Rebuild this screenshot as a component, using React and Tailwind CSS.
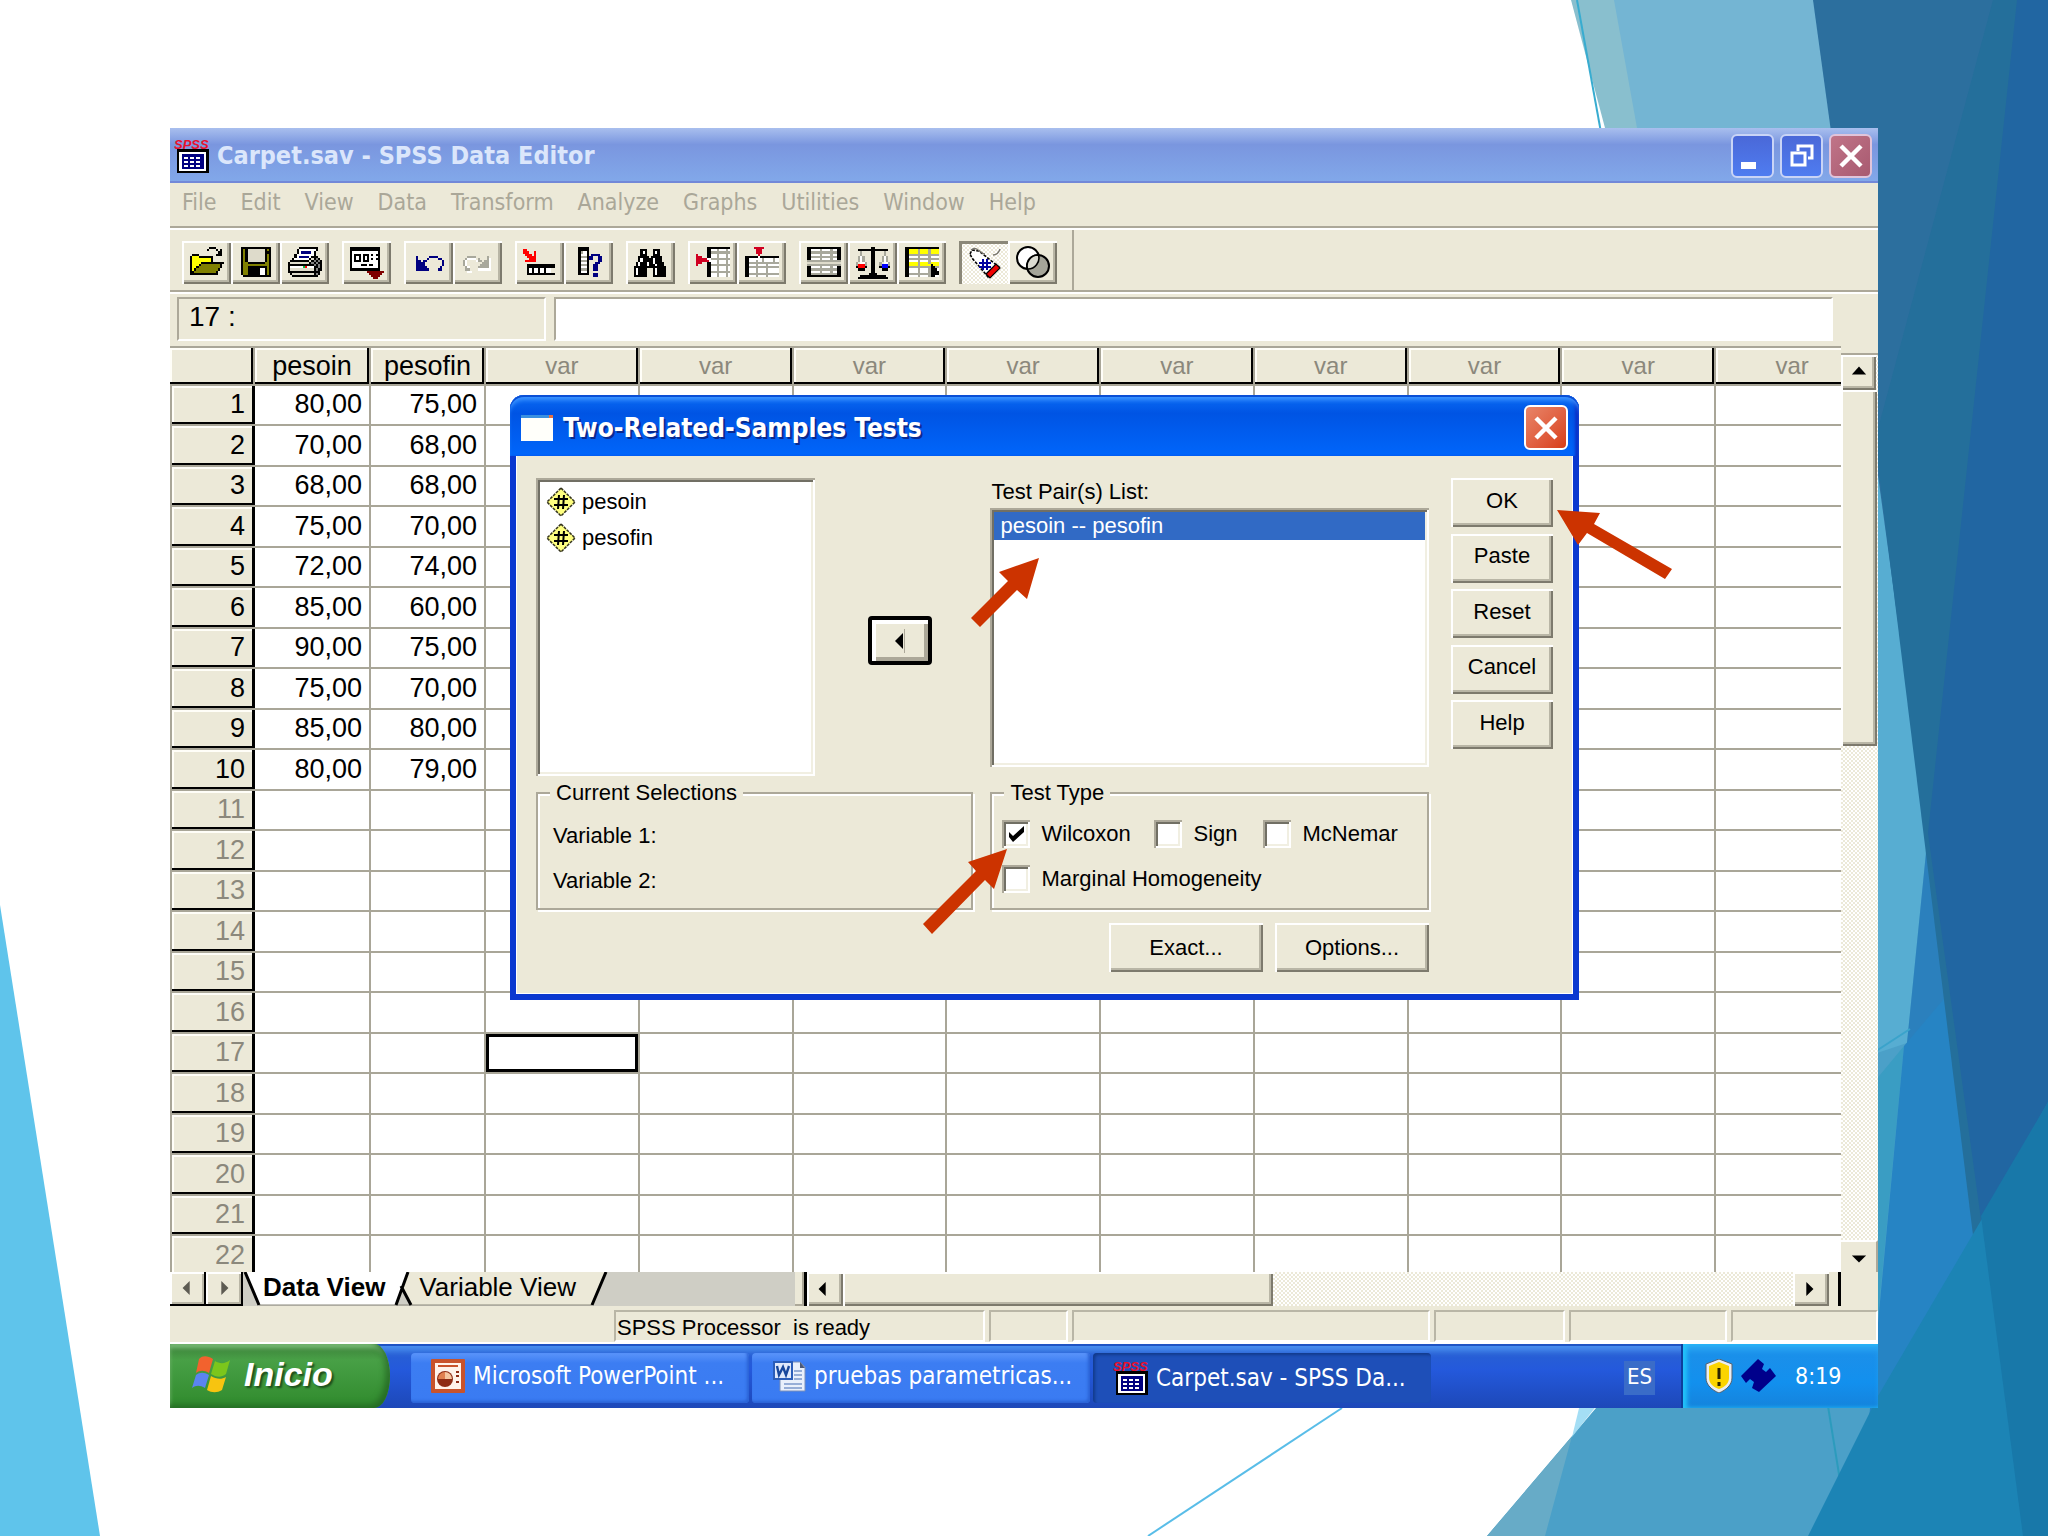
import React from "react";

const UI = "font-['DejaVu_Sans_Condensed','DejaVu_Sans',sans-serif]";
const RAISED =
  "bg-[#ece9d8] shadow-[inset_2px_2px_0_#ffffff,inset_-2px_-2px_0_#7d7a6d,inset_-4px_-4px_0_#b9b6a6]";
const DITHER =
  "bg-[repeating-conic-gradient(#ffffff_0_25%,#ece9d8_0_50%)] [background-size:4px_4px]";

const INK = {
  k: "#000000",
  w: "#ffffff",
  y: "#ffff00",
  o: "#808000",
  s: "#dedbcb",
  g: "#808080",
  G: "#a8a89c",
  r: "#ff0000",
  R: "#d00020",
  b: "#000080",
  B: "#0000ff",
  m: "#800000",
  l: "#00c040",
};

function Pixels({ map, className }) {
  const cells = [];
  map.forEach((row, y) => {
    let x = 0;
    while (x < row.length) {
      const c = row[x];
      let n = 1;
      while (row[x + n] === c) n += 1;
      if (INK[c]) cells.push(<rect key={`${x}-${y}`} x={x} y={y} width={n} height="1" fill={INK[c]} />);
      x += n;
    }
  });
  return (
    <svg viewBox="0 0 16 16" className={className} shapeRendering="crispEdges" aria-hidden="true">
      {cells}
    </svg>
  );
}

const ICONS = {
  open: [
    "................",
    ".........kkk....",
    "........k...k.k.",
    ".............kk.",
    ".kkk........kkk.",
    "kyyykkkkkkk.....",
    "kyyyyyyyyyk.....",
    "kyyyyyyyyyk.....",
    "kyyyykkkkkkkkkkk",
    "kyyykoooooooook.",
    "kyykooooooooook.",
    "kykooooooooook..",
    "kkooooooooook...",
    "kkkkkkkkkkkkk...",
  ],
  save: [
    "................",
    ".kkkkkkkkkkkkkk.",
    ".koksssssssskok.",
    ".koksssssssskkk.",
    ".koksssssssskok.",
    ".koksssssssskok.",
    ".koksssssssskok.",
    ".koksssssssskok.",
    ".kookkkkkkkkook.",
    ".kooooooooooook.",
    ".kookkkkkkkkkok.",
    ".kookkkkkkwwkok.",
    ".kookkkkkkwwkok.",
    ".kookkkkkkwwkok.",
    "..kkkkkkkkkkkkk.",
  ],
  print: [
    "................",
    ".....kkkkkkkkk..",
    "....kwwwwwwwwk..",
    "....kwbbbbbwk...",
    "...kwwwwwwwwk...",
    "...kwbbbbbwkkk..",
    "..kwwwwwwwkskgk.",
    ".kkkkkkkkkskgkgk",
    "kssssssssskgkgkk",
    "kkkkkkkkkkkkgkgk",
    "kwwwwwwlrwwwkkgk",
    "kssssssssssskgkk",
    "kkkkkkkkkkkkkkk.",
    ".ksssssssssskgk.",
    "..kkkkkkkkkkkk..",
  ],
  recall: [
    "................",
    "kkkkkkkkkkkkkk..",
    "kkkkkkkkkkkkkk..",
    "kwwwwwwwwwwwwk..",
    "kwkkkwkkkwkwkk..",
    "kwkwkwkwkwwwwk..",
    "kwkwkwkwkwkwkk..",
    "kwkkkwkkkwwwwk..",
    "kwwwwwwwwwwwwk..",
    "kwwwwkkkwkkwwk..",
    "kwwwwwwwwwwwwk..",
    "kkkkkkkkkkkkkk..",
    "........mmmmmmmm",
    ".........mmmmmm.",
    "..........mmmm..",
    "...........mm...",
  ],
  undo: [
    "................",
    "................",
    "................",
    "................",
    "................",
    "..b.....bbbb....",
    "..b....b....bb..",
    "..bb.bb.......b.",
    "..bbbb........b.",
    "..bbbb........b.",
    "..bbbbb......b..",
    "..bbbbbb....bb..",
  ],
  redo: [
    "................",
    "................",
    "................",
    "................",
    "................",
    "...GGGG.....G...",
    "..Gwwww.G...Gw..",
    ".Gw....wGG.GGw..",
    ".Gw.......GGGw..",
    ".Gw......GGGGw..",
    "..Gw....GGGGGw..",
    "..GG....wwwwww..",
    "...ww...........",
  ],
  gotoCase: [
    "................",
    "................",
    "rr..............",
    "rrr..r..........",
    ".rrr.r..........",
    "..rrrr..........",
    "...rrr..........",
    ".rrrrr..........",
    "................",
    "..kkkkkkkkkkkkk.",
    "..kkkkkkkkkkkkk.",
    "..kwkwwkwwkww...",
    "..kwkwwkwwkww...",
    "..kkkkkkkkkkkkk.",
  ],
  variables: [
    "................",
    "...kkkkk........",
    "...kkkkk........",
    "...kGwwk........",
    "...kwwwk.bbbb...",
    "...kGGGkbb..bb..",
    "...kwwwkbb..bb..",
    "...kGGGk....bb..",
    "...kwwwk...bb...",
    "...kGGGk..bb....",
    "...kwwwk..bb....",
    "...kGGGk..bb....",
    "...kwwwk........",
    "...kkkkk..bb....",
    "..........bb....",
  ],
  find: [
    "................",
    "................",
    "...kkk...kkk....",
    "...kwk...kwk....",
    "...kkk...kkk....",
    "..kkkkk.kkkkk...",
    "..kwkkkkkwkkk...",
    "..kwkkkkkwkkk...",
    ".kwkkkwkkwkkkk..",
    ".kwkkkwkkkwkkk..",
    "kkkkkkkkkkkkkkk.",
    "kwkkkk...kwkkkk.",
    "kwkkkk...kwkkkk.",
    "kwkkkk...kwkkkk.",
    "kkkkkk...kkkkkk.",
  ],
  insertCase: [
    "................",
    ".....kkkkkkkkkkk",
    ".....kkwwwGwwwGw",
    ".....kkGGGGGGGGG",
    "R....kkwwwGwwwGw",
    "RRR..kkwwwGwwwGw",
    "RRRRRwwGGGGGGGGG",
    "RRRRRRwwwwGwwwGw",
    "RRR..kkwwwGwwwGw",
    "R....kkGGGGGGGGG",
    ".....kkwwwGwwwGw",
    ".....kkwwwGwwwGw",
    ".....kkGGGGGGGGG",
    ".....kkwwwGwwwGw",
    ".....kkwwwGwwwGw",
  ],
  insertVar: [
    "................",
    "....RRRRR.......",
    ".....RRR........",
    ".....RRR........",
    "......R.........",
    "kkkkkkwkkkkkkkkk",
    "kkwwwwwwGwwwwGww",
    "kkwwwGwwGwwwwGww",
    "kkGGGGGGGGGGGGGG",
    "kkwwwGwwwwGwwwww",
    "kkGGGGGGGGGGGGGG",
    "kkwwwGwwwwGwwwww",
    "kkwwwGwwwwGwwwww",
    "kkGGGGGGGGGGGGGG",
    "kkwwwGwwwwGwwwww",
  ],
  split: [
    "................",
    "kkkkkkkkkkkkkkkk",
    "kkwwwwGwwwwGwwkk",
    "kkGGGGGGGGGGGGkk",
    "kkwwwwGwwwwGwwkk",
    "kkGGGGGGGGGGGGkk",
    "kkwwwwGwwwwGwwkk",
    "GGGGGGGGGGGGGGGG",
    "ssssssssssssssss",
    "GGGGGGGGGGGGGGGG",
    "kkwwwwGwwwwGwwkk",
    "kkGGGGGGGGGGGGkk",
    "kkwwwwGwwwwGwwkk",
    "kkGGGGGGGGGGGGkk",
    "kkkkkkkkkkkkkkkk",
  ],
  weight: [
    "................",
    ".......kk.......",
    ".kkkkkkkkkkkkkk.",
    "..G....kk....G..",
    "..G....kk....G..",
    ".GwG...kk...GwG.",
    ".GwG...kk...GwG.",
    ".GwG...kk...GwG.",
    "G.wwG..kk..G.wwG",
    "GrrrG..kk..GBBBG",
    "krrrk..kk..kBBBk",
    ".kkk...kk...kkk.",
    ".......kk.......",
    "......kkkk......",
    "..kkkkkkkkkkkk..",
    ".kkkkkkkkkkkkkk.",
  ],
  select: [
    "................",
    "kkkkkkkkkkkkkkkk",
    "kkyyyyGyyyyGyyyy",
    "kkyyyyGyyyyGyyyy",
    "kkGGGGGGGGGGGGGG",
    "kkwwwwGwwwwGwwww",
    "kkGGGGGGGGGGGGGG",
    "kkwwwwGwwwwGwwww",
    "kkyyyyGyyyyGyyyy",
    "kkyyyyGyyyyykyyy",
    "kkGGGGGGGGGGkkGG",
    "kkwwwwGwwwwGkkkw",
    "kkwwwwGwwwwGkkkk",
    "kkGGGGGGGGGGkkkk",
    "kkwwwwGwwwwGkkww",
  ],
};

function TagIcon() {
  return (
    <svg viewBox="0 0 34 34" className="size-[34px]" aria-hidden="true">
      <path d="M3 9 5 5l7 1 20 16-10 11L5 13z" fill="#ffffff" stroke="#000" strokeWidth="1.6" strokeDasharray="3 1.4" />
      <path d="m21 27 8-8 4 4-10 10-4-4z" fill="#f00000" stroke="#000" strokeWidth="1.2" />
      <path d="M16 14v11M20 14v11M12 18h12M12 22h12" stroke="#0000a0" strokeWidth="2" />
      <path d="M4 5c6-5 9 4 14 4M26 10c4 0 6-3 7-6" stroke="#77756c" strokeWidth="1.4" fill="none" />
    </svg>
  );
}

function SetsIcon() {
  return (
    <svg viewBox="0 0 34 34" className="size-[34px]" aria-hidden="true">
      <circle cx="12" cy="13" r="11" fill="#ffffff" stroke="#000" strokeWidth="2" />
      <circle cx="22" cy="21" r="11" fill="#a5a599" stroke="#000" strokeWidth="2" />
      <path d="M11.5 24A11 11 0 0 1 22.5 10 11 11 0 0 1 11.5 24z" fill="#dcdcd2" stroke="#000" strokeWidth="1.6" />
    </svg>
  );
}

function SpssIcon() {
  return (
    <svg viewBox="0 0 35 36" className="h-9 w-[35px] shrink-0" aria-hidden="true">
      <rect x="3" y="11" width="32" height="24" fill="#000" />
      <rect x="5" y="14" width="27" height="19" fill="#fff" />
      <rect x="8" y="16" width="22" height="15" fill="#000080" />
      {[0, 1, 2].map((r) =>
        [0, 1, 2].map((c) => (
          <rect key={`${r}${c}`} x={10 + c * 6} y={19 + r * 4} width="4" height="2" fill="#fff" />
        )),
      )}
      <text x="0" y="11" fontSize="13" fontWeight="700" fontStyle="italic" fill="#e8102c" fontFamily="Liberation Sans">
        SPSS
      </text>
    </svg>
  );
}

function WindowsLogo() {
  return (
    <svg viewBox="0 0 40 38" className="h-[38px] w-10 shrink-0" aria-hidden="true">
      <path d="M7 4c4-4 9-3 14 0l-4 14c-5-3-9-3-13 0z" fill="#f2622e" />
      <path d="M23 6c5 3 10 3 15-1l-4 14c-5 4-10 3-15 0z" fill="#7cc61c" />
      <path d="M4 20c4-3 8-3 13 0l-4 13c-5-3-9-3-13 0z" fill="#5b84f0" />
      <path d="M19 21c5 3 10 4 15 1l-4 13c-5 3-10 3-15 0z" fill="#f7c410" />
    </svg>
  );
}

function PptIcon() {
  return (
    <svg viewBox="0 0 34 34" className="size-[34px] shrink-0" aria-hidden="true">
      <rect width="34" height="34" rx="1" fill="#c8532b" />
      <rect x="4" y="4" width="26" height="26" fill="#fff3ea" />
      <path d="M7 7h20" stroke="#c8532b" strokeWidth="2" />
      <circle cx="14" cy="20" r="8" fill="#8e2c14" />
      <path d="M14 20v-7a7 7 0 0 1 7 7z" fill="#f5c6a0" />
      <path d="M14 20H7a7 7 0 0 1 7-7z" fill="#e08050" />
      <path d="M25 13h3M25 17h3M25 23h3" stroke="#8e2c14" strokeWidth="2" />
    </svg>
  );
}

function WordIcon() {
  return (
    <svg viewBox="0 0 34 34" className="size-[34px] shrink-0" aria-hidden="true">
      <path d="M8 3h20l5 5v24H8z" fill="#e9f0fb" stroke="#7a8fb8" />
      <path d="M28 3v6h5" fill="#4a5878" />
      <path d="M22 12h8M22 16h8M12 25h18M12 29h18M22 20h8" stroke="#7b98cc" strokeWidth="1.6" />
      <rect x="1" y="2" width="20" height="19" fill="#2a5db8" />
      <rect x="3" y="4" width="16" height="15" fill="#dfe9fb" />
      <path d="m5 7 2 9 4-8 3 8 3-9" stroke="#17479c" strokeWidth="2.4" fill="none" />
    </svg>
  );
}

function Cross({ className }) {
  return (
    <svg viewBox="0 0 24 24" className={className} aria-hidden="true">
      <path d="M2 2l20 20M22 2 2 22" stroke="#fff" strokeWidth="4.5" />
    </svg>
  );
}

function Backdrop() {
  return (
    <svg
      viewBox="0 0 2048 1536"
      preserveAspectRatio="none"
      className="absolute inset-0 h-full w-full"
      aria-hidden="true"
    >
      <path d="M1571 0h300v1100L1605 128z" fill="#89bfce" />
      <path d="M1614 0h300v600l-150 0L1637 128z" fill="#74b5d3" />
      <path d="M1577 0 1602 138" stroke="#38acd0" strokeWidth="2" />
      <path d="M1800 400h248v1136H1487l109-128 200-300z" fill="#4ba0c8" />
      <path d="M1800 400h150l-22 433-21 210-60 20z" fill="#57add2" />
      <path d="M1581 1400h20l-29 37z" fill="#a4def5" />
      <path d="M1596 1408 1487 1536h58l27-100z" fill="#67abc7" />
      <path d="M1928 833h120v703h-190l49-493z" fill="#2b80bd" />
      <path d="M1860 1099 1904 1046 1874 1360h-14z" fill="#3a9dc3" />
      <path d="M1904 1046 1965 974l60 562h-167z" fill="#2684c4" />
      <path d="M1827 1400 1849 1536" stroke="#2c9bbd" strokeWidth="2" />
      <path d="M1870 1055 1910 1029" stroke="#3aa3cb" strokeWidth="2" />
      <path d="M1813 0h235v1536h-25z" fill="#2c6f9e" />
      <path d="M1993 0h55v1300h-67L1875 440z" fill="#246f9b" />
      <path d="M2017 0h31v1300h-56L1928 833z" fill="#2166a2" />
      <path d="M2048 1102v434h-240l70-140 115-196z" fill="#1c84b5" />
      <path d="M2048 1102v434h-25l-42-320z" fill="#1878a9" />
      <path d="M1342 1408 1148 1536" stroke="#59bde8" strokeWidth="2" />
      <path d="M0 905 100 1536H0z" fill="#5fc4eb" />
    </svg>
  );
}

function TitleBar() {
  const chrome =
    "flex h-11 w-[43px] items-center justify-center rounded-md border-2 border-[#c9d4f6] bg-linear-to-b from-[#4a68d8] to-[#4f7cf0]";
  return (
    <header className="flex h-[55px] shrink-0 items-center bg-linear-to-b from-[#a9bfee] via-[#7a96df] via-30% to-[#82a9ea] pr-[6px] pl-1 shadow-[inset_0_-2px_0_#7288d8]">
      <SpssIcon />
      <h1 className={`ml-2 flex-1 text-[25px] leading-8 font-bold text-[#dbe6fb] ${UI}`}>Carpet.sav - SPSS Data Editor</h1>
      <div className="flex gap-[6px]">
        <button type="button" aria-label="Minimize" className={chrome}>
          <span className="mt-5 mr-2 h-[7px] w-[15px] bg-white" />
        </button>
        <button type="button" aria-label="Restore" className={chrome}>
          <svg viewBox="0 0 24 24" className="size-6" aria-hidden="true">
            <path d="M8 7V2h14v12h-4" fill="none" stroke="#fff" strokeWidth="3" />
            <path d="M2 9h13v12H2z" fill="none" stroke="#fff" strokeWidth="3" />
          </svg>
        </button>
        <button
          type="button"
          aria-label="Close"
          className="flex h-11 w-[43px] items-center justify-center rounded-md border-2 border-[#e0c4da] bg-linear-to-br from-[#c07488] to-[#a85a70]"
        >
          <Cross className="size-6" />
        </button>
      </div>
    </header>
  );
}

const MENUS = ["File", "Edit", "View", "Data", "Transform", "Analyze", "Graphs", "Utilities", "Window", "Help"];

function MenuBar() {
  return (
    <nav className={`flex h-[45px] shrink-0 items-center gap-6 border-b-2 border-[#aca899] pb-1 pl-3 text-[23px] text-[#aaa798] ${UI}`}>
      {MENUS.map((m) => (
        <button key={m} type="button">
          {m}
        </button>
      ))}
    </nav>
  );
}

const TOOLS = [
  [["Open", "open"], ["Save", "save"], ["Print", "print"]],
  [["Dialog Recall", "recall"]],
  [["Undo", "undo"], ["Redo", "redo"]],
  [["Go to Case", "gotoCase"], ["Variables", "variables"]],
  [["Find", "find"]],
  [["Insert Case", "insertCase"], ["Insert Variable", "insertVar"]],
  [["Split File", "split"], ["Weight Cases", "weight"], ["Select Cases", "select"]],
  [["Value Labels", "tag"], ["Use Sets", "sets"]],
];

function Toolbar() {
  return (
    <div className="flex h-16 shrink-0 items-stretch border-t-2 border-b-2 border-t-white border-b-[#aca899] pl-3">
      <div className="flex items-center gap-[13px] border-r-2 border-[#aca899] pt-1 pr-[15px]">
        {TOOLS.map((group) => (
          <div key={group[0][0]} className="flex">
            {group.map(([label, icon]) => (
              <button
                key={label}
                type="button"
                aria-label={label}
                className={`flex h-[43px] w-[49px] items-center justify-center ${
                  icon === "tag" ? `${DITHER} shadow-[inset_3px_3px_0_#8b8879]` : RAISED
                }`}
              >
                {icon === "tag" && <TagIcon />}
                {icon === "sets" && <SetsIcon />}
                {ICONS[icon] && <Pixels map={ICONS[icon]} className="size-[34px]" />}
              </button>
            ))}
          </div>
        ))}
      </div>
    </div>
  );
}

function CellBar() {
  return (
    <div className="flex h-[54px] shrink-0 items-start gap-2 border-t-2 border-white pt-[3px] pr-[45px] pl-[7px] font-['Liberation_Sans',sans-serif] text-[28px]">
      <output className="h-11 w-[369px] border-2 border-[#aca899] border-r-white border-b-white pl-[10px] leading-9">
        17 :
      </output>
      <input aria-label="Cell value" className="h-11 min-w-0 flex-1 border-2 border-[#aca899] border-r-white border-b-white bg-white px-2" />
    </div>
  );
}

const DATA = [
  ["80,00", "75,00"],
  ["70,00", "68,00"],
  ["68,00", "68,00"],
  ["75,00", "70,00"],
  ["72,00", "74,00"],
  ["85,00", "60,00"],
  ["90,00", "75,00"],
  ["75,00", "70,00"],
  ["85,00", "80,00"],
  ["80,00", "79,00"],
];
const ROWS = Array.from({ length: 22 }, (_, i) => i + 1);
const VARS = Array.from({ length: 9 }, (_, i) => i);
const HEAD =
  "border-r-2 border-b-2 border-[#a9a698] bg-[#ece9d8] font-normal shadow-[inset_-2px_-2px_0_#000000,inset_2px_2px_0_#fffef8]";

function Sheet() {
  return (
    <div className="min-w-0 flex-1 overflow-hidden border-t-2 border-[#a9a698] bg-white">
      <table className="w-[calc(100%+29px)] table-fixed border-separate border-spacing-0 font-['Liberation_Sans',sans-serif] text-[27px] leading-8">
        <colgroup>
          <col className="w-[85px]" />
          <col className="w-[116px]" />
          <col className="w-[115px]" />
          {VARS.map((v) => (
            <col key={v} />
          ))}
        </colgroup>
        <thead>
          <tr className="h-[38px]">
            <th className={HEAD} aria-label="Case" />
            <th className={HEAD}>pesoin</th>
            <th className={HEAD}>pesofin</th>
            {VARS.map((v) => (
              <th key={v} className={`${HEAD} text-[24px] text-[#8b887c]`}>
                var
              </th>
            ))}
          </tr>
        </thead>
        <tbody>
          {ROWS.map((n) => (
            <tr key={n} className="odd:h-10 even:h-[41px]">
              <th
                scope="row"
                className={`border-b-2 border-l-2 border-[#a9a698] bg-[#ece9d8] p-0 pr-[10px] pb-[2px] text-right font-normal shadow-[inset_-3px_-2px_0_#000000,inset_2px_2px_0_#fffef8] ${
                  n > 10 ? "text-[#8b887c]" : "text-black"
                }`}
              >
                {n}
              </th>
              {[0, 1].map((c) => (
                <td key={c} className="border-r-2 border-b-2 border-[#a9a698] p-0 pr-[7px] pb-[2px] text-right">
                  {DATA[n - 1] ? DATA[n - 1][c] : ""}
                </td>
              ))}
              {VARS.map((v) => (
                <td
                  key={v}
                  className={`border-r-2 border-b-2 border-[#a9a698] p-0 ${
                    n === 17 && v === 0 ? "shadow-[inset_0_0_0_3px_#000000]" : ""
                  }`}
                />
              ))}
            </tr>
          ))}
        </tbody>
      </table>
    </div>
  );
}

function Triangle({ dir, fill = "#000000" }) {
  const d = {
    up: "M9 4 17 13H1z",
    down: "M9 13 1 5h16z",
    left: "M4 9l8-8v16z",
    right: "M14 9 6 1v16z",
  }[dir];
  return (
    <svg viewBox="0 0 18 18" className="size-4" aria-hidden="true">
      <path d={d} fill={fill} />
    </svg>
  );
}

function VerticalScroll() {
  return (
    <div className={`flex w-[37px] shrink-0 flex-col ${DITHER}`}>
      <div className="h-[9px] border-b-2 border-[#aca899] bg-[#ece9d8]" />
      <button type="button" aria-label="Scroll up" className={`mr-[2px] flex h-[35px] items-center justify-center pb-1 ${RAISED}`}>
        <Triangle dir="up" />
      </button>
      <div className={`mr-px h-[356px] ${RAISED}`} />
      <div className="flex-1" />
      <button
        type="button"
        aria-label="Scroll down"
        className="flex h-8 items-center justify-center border-t-2 border-r-2 border-t-white border-r-[#aca899] bg-[#ece9d8] pt-1"
      >
        <Triangle dir="down" />
      </button>
    </div>
  );
}

function TabStrip() {
  const nav =
    "flex h-[34px] items-center justify-center border-r-2 border-b-2 border-black bg-[#ece9d8] shadow-[inset_2px_2px_0_#ffffff,inset_-2px_-2px_0_#b9b6a6]";
  return (
    <div className="flex h-[34px] shrink-0 bg-[#ece9d8]">
      <button type="button" aria-label="Previous sheet" className={`${nav} w-9`}>
        <Triangle dir="left" fill="#5d5b52" />
      </button>
      <button type="button" aria-label="Next sheet" className={`${nav} w-[37px]`}>
        <Triangle dir="right" fill="#5d5b52" />
      </button>
      <div className="relative flex h-[34px] w-[552px] bg-[#cfcec5] font-['Liberation_Sans',sans-serif] text-[26px] leading-7">
        <svg viewBox="0 0 366 34" className="absolute top-0 left-0 h-[34px] w-[366px]" aria-hidden="true">
          <path d="M2 0 16 33H153L165 0z" fill="#ffffff" />
          <path d="M165 0 158 16 167 33H349L363 0z" fill="#ece9d8" />
          <path d="M16 33H349" stroke="#8b887c" strokeWidth="1" />
          <path d="M2 0 16 33M165 0 153 33M158 14 168 33M363 0 349 33" stroke="#000" strokeWidth="3" fill="none" />
        </svg>
        <button type="button" className="relative ml-5 pb-1 font-bold">
          Data View
        </button>
        <button type="button" className="relative ml-[34px] pb-1">
          Variable View
        </button>
      </div>
      <div className="w-[9px] border-r-2 border-b-2 border-[#aca899]" />
      <div className="w-[3px] bg-black" />
      <button type="button" aria-label="Scroll left" className={`flex w-9 items-center justify-center pr-1 ${RAISED}`}>
        <Triangle dir="left" />
      </button>
      <div className={`flex min-w-0 flex-1 ${DITHER}`}>
        <div className={`w-[430px] ${RAISED}`} />
      </div>
      <button type="button" aria-label="Scroll right" className={`flex w-9 items-center justify-center pr-1 ${RAISED}`}>
        <Triangle dir="right" />
      </button>
      <div className="mr-[37px] w-3 border-r-3 border-black" />
    </div>
  );
}

function StatusBar() {
  const pane = "h-8 border-2 border-[#b9b6a6] border-r-white border-b-white";
  return (
    <footer className="flex h-[38px] shrink-0 items-end gap-1 border-b-2 border-white pl-[444px] font-['Liberation_Sans',sans-serif] text-[22px] leading-8">
      <div className={`${pane} w-[371px] pl-px whitespace-pre`}>SPSS Processor  is ready</div>
      <div className={`${pane} w-[79px]`} />
      <div className={`${pane} min-w-0 flex-1`} />
      <div className={`${pane} w-[131px]`} />
      <div className={`${pane} w-[158px]`} />
      <div className={`${pane} w-[147px]`} />
    </footer>
  );
}

function TaskButton({ icon, label, active }) {
  return (
    <button
      type="button"
      className={`flex h-[50px] w-[338px] items-center gap-2 rounded-sm pl-5 text-[24px] leading-8 whitespace-nowrap text-white ${
        active
          ? "bg-[#1e4fb8] shadow-[inset_2px_2px_3px_#123a8c]"
          : "bg-linear-to-b from-[#5a94fa] via-[#3c7df2] via-20% to-[#3a7bf2] pb-1 shadow-[inset_-2px_-2px_3px_#2a62d4]"
      }`}
    >
      {icon}
      {label}
    </button>
  );
}

function Taskbar() {
  return (
    <div
      className={`flex h-16 shrink-0 bg-linear-to-b from-[#2a62d0] via-[#2459dc] via-40% to-[#1d48b8] shadow-[inset_0_2px_0_#1f54c4,inset_0_9px_6px_-2px_#4a90f0] ${UI}`}
    >
      <button
        type="button"
        className="flex w-[220px] items-center gap-3 rounded-r-[16px_32px] bg-linear-to-b from-[#3c7f3a] via-[#48a046] via-25% to-[#2f8a2c] pb-1 pl-[22px] shadow-[inset_-4px_-3px_6px_#256b24,inset_0_4px_4px_#7fc07c]"
      >
        <WindowsLogo />
        <span className="font-['Liberation_Sans',sans-serif] text-[34px] leading-10 font-bold text-white italic [text-shadow:2px_2px_2px_#1d4d1c]">
          Inicio
        </span>
      </button>
      <div className="ml-[21px] flex min-w-0 flex-1 items-center gap-[3px] pt-1">
        <TaskButton icon={<PptIcon />} label="Microsoft PowerPoint ..." />
        <TaskButton icon={<WordIcon />} label="pruebas parametricas..." />
        <TaskButton icon={<SpssIcon />} label="Carpet.sav - SPSS Da..." active />
        <span className="mr-[26px] ml-auto bg-[#3a6cc8] px-[3px] pb-[2px] text-[22px] leading-8 text-white">ES</span>
      </div>
      <div className="flex w-[197px] items-center border-l-2 border-[#0d3f9c] bg-linear-to-b from-[#1d8fe8] via-[#1290ee] via-60% to-[#1583dc] pl-[22px] shadow-[inset_4px_0_4px_#22c4fb,inset_0_8px_6px_-2px_#2aa8f4]">
        <svg viewBox="0 0 28 34" className="h-[34px] w-7" aria-hidden="true">
          <path d="M14 0 27 5v14c0 7-6 12-13 15C7 31 1 26 1 19V5z" fill="#e9edf2" stroke="#54606e" />
          <path d="M14 3 24 7v12c0 5-4 9-10 11C8 28 4 24 4 19V7z" fill="#fbd400" />
          <path d="M14 9v11M14 23v4" stroke="#2b2400" strokeWidth="3" />
        </svg>
        <svg viewBox="0 0 36 34" className="ml-2 h-[34px] w-9" aria-hidden="true">
          <path d="M17 0 23 5 21 10 25 13 29 9 35 17 18 33 11 29 13 23 9 20 5 24 0 17z" fill="#00008b" />
        </svg>
        <time className="ml-[18px] text-[23px] text-white">8:19</time>
      </div>
    </div>
  );
}

function VarItem({ name }) {
  return (
    <li role="option" aria-selected="false" className="flex h-9 items-center gap-[6px]">
      <svg viewBox="0 0 30 30" className="size-[30px]" aria-hidden="true">
        <path d="M15 1 29 15 15 29 1 15z" fill="#ffff80" stroke="#33321c" strokeWidth="1.5" strokeDasharray="3 1" />
        <path d="M13 8l-1 14M18 8l-1 14M8 12h14M8 18h14" stroke="#000" strokeWidth="2" />
      </svg>
      {name}
    </li>
  );
}

function Check({ label, checked }) {
  return (
    <label className="flex h-[45px] items-center gap-[11px] whitespace-nowrap">
      <span className="grid">
        <input
          type="checkbox"
          defaultChecked={checked}
          className="peer h-7 w-7 appearance-none bg-white shadow-[inset_2px_2px_0_#aca899,inset_-2px_-2px_0_#ffffff,inset_4px_4px_0_#716f64,inset_-4px_-4px_0_#f1efe2] [grid-area:1/1]"
        />
        <svg viewBox="0 0 28 28" className="invisible size-7 peer-checked:visible [grid-area:1/1]" aria-hidden="true">
          <path d="M7 12v5l4 5 11-10V6L11 16z" fill="#000" />
        </svg>
      </span>
      {label}
    </label>
  );
}

function Group({ title, className, children }) {
  return (
    <fieldset className={`h-[129px] min-w-0 border-2 border-[#aca899] shadow-[2px_2px_0_#ffffff,inset_2px_2px_0_#ffffff] ${className}`}>
      <legend className="ml-3 bg-[#ece9d8] px-[6px] leading-6">{title}</legend>
      {children}
    </fieldset>
  );
}

const SUNKEN =
  "bg-white shadow-[inset_2px_2px_0_#aca899,inset_-2px_-2px_0_#ffffff,inset_4px_4px_0_#716f64,inset_-4px_-4px_0_#f1efe2]";

function Dialog() {
  return (
    <section
      role="dialog"
      aria-labelledby="dialog-title"
      className="absolute top-[267px] left-[340px] w-[1069px] rounded-t-[14px] border-x-[6px] border-b-[6px] border-[#0a38d0] bg-[#ece9d8] shadow-[inset_0_0_0_1px_#ffffff]"
    >
      <header className="-mx-[6px] flex h-[61px] items-center rounded-t-[14px] bg-linear-to-b from-[#0f6cf5] via-[#0054e4] via-30% to-[#0066fb] pt-1 pr-[11px] pl-[11px] shadow-[inset_0_2px_0_#0a4fd6,inset_0_7px_4px_-2px_#3d95ff,inset_-5px_0_3px_-1px_#0a30c8]">
        <svg viewBox="0 0 32 26" className="h-[26px] w-8" aria-hidden="true">
          <rect width="32" height="26" fill="#fffffa" />
          <rect width="32" height="3" fill="#3a90e0" />
          <rect x="28" width="4" height="3" fill="#e87040" />
        </svg>
        <h2 id="dialog-title" className={`ml-[10px] flex-1 text-[26px] leading-8 font-bold text-white [text-shadow:2px_2px_0_#0a2a90] ${UI}`}>
          Two-Related-Samples Tests
        </h2>
        <button
          type="button"
          aria-label="Close dialog"
          className="flex h-[45px] w-11 items-center justify-center rounded-md border-2 border-white bg-linear-to-br from-[#e88468] to-[#d83c14]"
        >
          <Cross className="size-6" />
        </button>
      </header>
      <div className="grid grid-cols-[454fr_460fr_102px] px-5 pt-[22px] pb-[22px] font-['Liberation_Sans',sans-serif] text-[22px] leading-7">
        <div className="mr-[17px]">
          <div className="flex">
            <ul role="listbox" aria-label="Variables" className={`h-[298px] w-[279px] pt-[6px] pl-[10px] ${SUNKEN}`}>
              <VarItem name="pesoin" />
              <VarItem name="pesofin" />
            </ul>
            <button
              type="button"
              aria-label="Move variable"
              className="mt-[138px] ml-[53px] flex h-[49px] w-16 items-center justify-center rounded-sm border-4 border-black bg-[#ece9d8] shadow-[inset_4px_4px_0_#ffffff,inset_-4px_-4px_0_#aca899]"
            >
              <svg viewBox="0 0 12 24" className="h-6 w-3" aria-hidden="true">
                <path d="M1 12 9 4v16z" fill="#000" />
                <path d="M10.5 0v24" stroke="#aca899" />
              </svg>
            </button>
          </div>
          <Group title="Current Selections" className="mt-[5px]">
            <p className="mt-2 ml-[15px] h-[45px] leading-[45px]">Variable 1:</p>
            <p className="ml-[15px] h-[45px] leading-[45px]">Variable 2:</p>
          </Group>
        </div>
        <div className="mr-[22px]">
          <p id="pairs-label" className="h-[30px] pl-px">
            Test Pair(s) List:
          </p>
          <ul role="listbox" aria-labelledby="pairs-label" className={`h-[259px] p-1 ${SUNKEN}`}>
            <li role="option" aria-selected="true" className="bg-[#316ac5] pl-[6px] text-white">
              pesoin -- pesofin
            </li>
          </ul>
          <Group title="Test Type" className="mt-[14px]">
            <div className="mt-1.5 ml-[10px] grid grid-cols-[152px_109px_1fr]">
              <Check label="Wilcoxon" checked />
              <Check label="Sign" />
              <Check label="McNemar" />
              <Check label="Marginal Homogeneity" />
            </div>
          </Group>
          <div className="mt-[13px] flex justify-end gap-3">
            <button type="button" className={`h-[49px] w-[154px] ${RAISED}`}>
              Exact...
            </button>
            <button type="button" className={`h-[49px] w-[154px] ${RAISED}`}>
              Options...
            </button>
          </div>
        </div>
        <div className="flex h-[271px] flex-col justify-between">
          {["OK", "Paste", "Reset", "Cancel", "Help"].map((b) => (
            <button key={b} type="button" className={`h-[49px] pb-1 ${RAISED}`}>
              {b}
            </button>
          ))}
        </div>
      </div>
    </section>
  );
}

function Pointers() {
  return (
    <svg
      viewBox="0 0 720 390"
      className="pointer-events-none absolute top-[422px] left-[740px] h-[390px] w-[720px] overflow-visible"
      aria-hidden="true"
    >
      <g fill="#cc3300">
        <path d="M129 8 89 22l9 9-37 37 9 9 37-37 10 9z" />
        <path d="M97 299 58 312l8 9-53 53 9 10 53-54 9 9z" />
        <path d="M647-40 690-37 684-26 762 19 755 29 677-17 668-5z" />
      </g>
    </svg>
  );
}

export default function App() {
  return (
    <div className="relative flex h-screen min-h-[1100px] overflow-hidden bg-white px-[170px] py-32 text-black">
      <Backdrop />
      <main className="relative flex min-w-0 flex-1 flex-col bg-[#ece9d8]">
        <TitleBar />
        <MenuBar />
        <Toolbar />
        <CellBar />
        <div className="flex min-h-0 flex-1">
          <Sheet />
          <VerticalScroll />
        </div>
        <TabStrip />
        <StatusBar />
        <Taskbar />
        <Dialog />
        <Pointers />
      </main>
    </div>
  );
}
